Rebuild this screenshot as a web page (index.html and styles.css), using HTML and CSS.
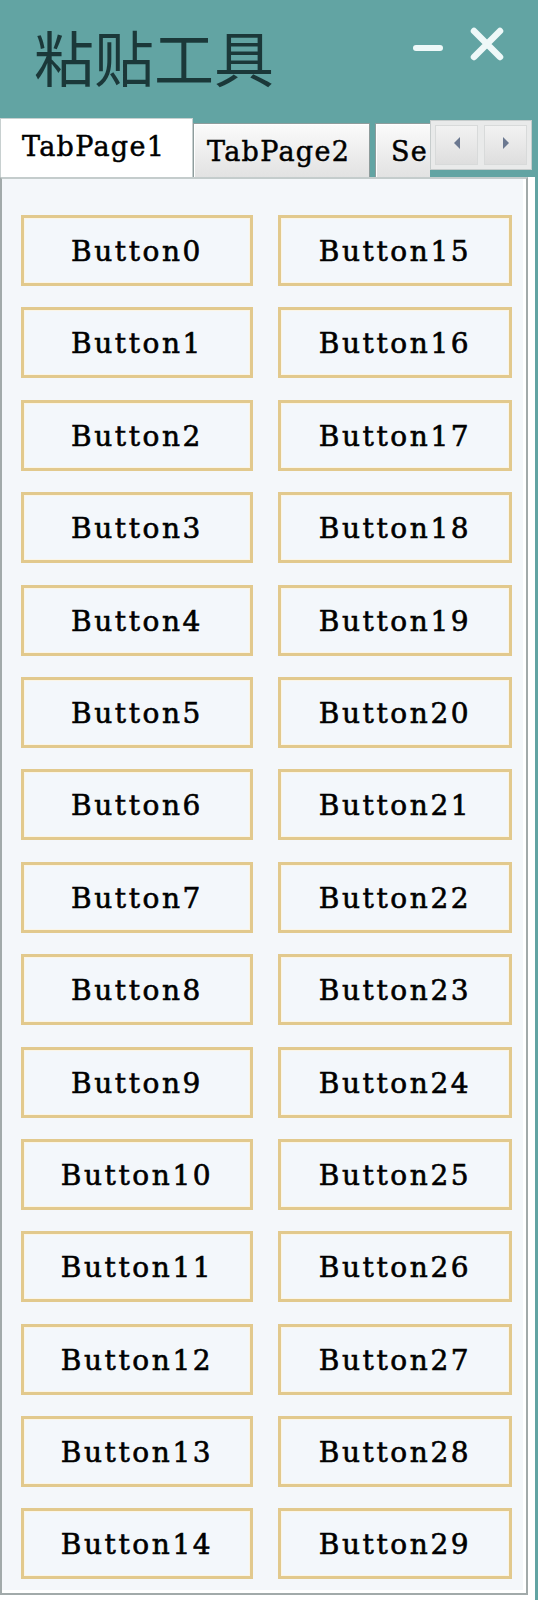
FILE: index.html
```html
<!DOCTYPE html>
<html lang="zh">
<head>
<meta charset="utf-8">
<title>粘贴工具</title>
<link rel="stylesheet" href="styles.css">
</head>
<body>
<div class="app">
  <div class="main">
    <div class="head">
      <div class="titlebar">
        <div class="title">粘贴工具</div>
        <div class="controls">
          <span class="min"></span>
          <svg class="close" width="34" height="34" viewBox="0 0 34 34"><path d="M4 4 L30 30 M30 4 L4 30" stroke="#eef8f8" stroke-width="6.5" stroke-linecap="round" fill="none"/></svg>
        </div>
      </div>
      <div class="tabs">
        <div class="tab active">TabPage1</div>
        <div class="tab">TabPage2</div>
        <div class="tab third">Se</div>
        <div class="scroller">
          <div class="sbtn"><svg width="10" height="14" viewBox="0 0 10 14"><path d="M8 1 L2 7 L8 13 Z" fill="#6b7890"/></svg></div>
          <div class="sbtn"><svg width="10" height="14" viewBox="0 0 10 14"><path d="M2 1 L8 7 L2 13 Z" fill="#6b7890"/></svg></div>
        </div>
      </div>
    </div>
    <div class="panel">
      <div class="grid">
        <div class="btn">Button0</div><div class="btn">Button15</div>
        <div class="btn">Button1</div><div class="btn">Button16</div>
        <div class="btn">Button2</div><div class="btn">Button17</div>
        <div class="btn">Button3</div><div class="btn">Button18</div>
        <div class="btn">Button4</div><div class="btn">Button19</div>
        <div class="btn">Button5</div><div class="btn">Button20</div>
        <div class="btn">Button6</div><div class="btn">Button21</div>
        <div class="btn">Button7</div><div class="btn">Button22</div>
        <div class="btn">Button8</div><div class="btn">Button23</div>
        <div class="btn">Button9</div><div class="btn">Button24</div>
        <div class="btn">Button10</div><div class="btn">Button25</div>
        <div class="btn">Button11</div><div class="btn">Button26</div>
        <div class="btn">Button12</div><div class="btn">Button27</div>
        <div class="btn">Button13</div><div class="btn">Button28</div>
        <div class="btn">Button14</div><div class="btn">Button29</div>
      </div>
    </div>
  </div>
</div>
</body>
</html>
```
FILE: styles.css
```css
html, body {
  margin: 0;
  padding: 0;
  background: #ffffff;
}
.app {
  width: 535px;
  min-height: 1600px;
  border-right: 3px solid #62a4a3;
  background: #ffffff;
}
.main {
  width: 535px;
}
.head {
  background: #62a4a3;
  height: 177px;
  display: flex;
  flex-direction: column;
}
.titlebar {
  height: 118px;
  display: flex;
  align-items: flex-start;
  box-sizing: border-box;
  padding-left: 34px;
}
.title {
  font-family: "Noto Sans CJK SC", sans-serif;
  font-size: 60px;
  line-height: 60px;
  margin-top: 26px;
  color: #1b3839;
}
.controls {
  margin-left: auto;
  margin-right: 31px;
  display: flex;
  align-items: flex-start;
  gap: 27px;
  padding-top: 27px;
}
.min {
  display: block;
  width: 30px;
  height: 6px;
  margin-top: 18px;
  border-radius: 3px;
  background: #eef8f8;
}
.close {
  display: block;
}
.tabs {
  position: relative;
  height: 59px;
  display: flex;
  align-items: flex-end;
  overflow: hidden;
  font-family: "DejaVu Serif", serif;
  font-size: 27px;
  line-height: 30px;
  letter-spacing: 1.3px;
  color: #000;
  -webkit-text-stroke: 0.5px #000;
}
.tab {
  box-sizing: border-box;
  height: 54px;
  width: 177px;
  padding: 13px 0 0 13px;
  border: 1px solid #8e9c9c;
  border-bottom: none;
  background: linear-gradient(#fbfbfb, #e2e2e2);
  box-shadow: inset 1px 1px 0 #ffffff;
  white-space: nowrap;
  flex: none;
}
.tab.active {
  width: 193px;
  height: 59px;
  padding-left: 21px;
  background: #ffffff;
  border-color: #c8d0d0;
  box-shadow: none;
}
.tab.third {
  margin-left: 5px;
  width: 55px;
  padding-left: 15px;
  border-right: none;
}
.scroller {
  position: absolute;
  left: 430px;
  top: 2px;
  width: 102px;
  height: 50px;
  box-sizing: border-box;
  background: #e9eaea;
  border: 1px solid #c6cccc;
  display: flex;
  gap: 6px;
  padding: 4px;
}
.sbtn {
  flex: 1;
  background: linear-gradient(#f2f2f2, #dedede);
  border: 1px solid #d8dada;
  display: flex;
  align-items: center;
  justify-content: center;
  padding-bottom: 4px;
}
.panel {
  box-sizing: border-box;
  width: 528px;
  height: 1418px;
  background: #f4f7fa;
  border: 2px solid #a2aaaa;
  border-top-color: #c4cccc;
  box-shadow: inset -3px -3px 0 #ffffff;
  padding: 36px 0 0 19px;
}
.grid {
  display: grid;
  grid-template-columns: 232px 234px;
  grid-auto-rows: 71px;
  column-gap: 25px;
  row-gap: 21.4px;
}
.btn {
  box-sizing: border-box;
  border: 3px solid #e2c98d;
  background: #f3f7fb;
  box-shadow: inset 0 0 0 1px #fbf5e6;
  display: flex;
  align-items: center;
  justify-content: center;
  font-family: "DejaVu Serif", serif;
  font-size: 28px;
  line-height: 31px;
  letter-spacing: 2.6px;
  color: #000;
  -webkit-text-stroke: 0.6px #000;
  padding-top: 2px;
}
```
